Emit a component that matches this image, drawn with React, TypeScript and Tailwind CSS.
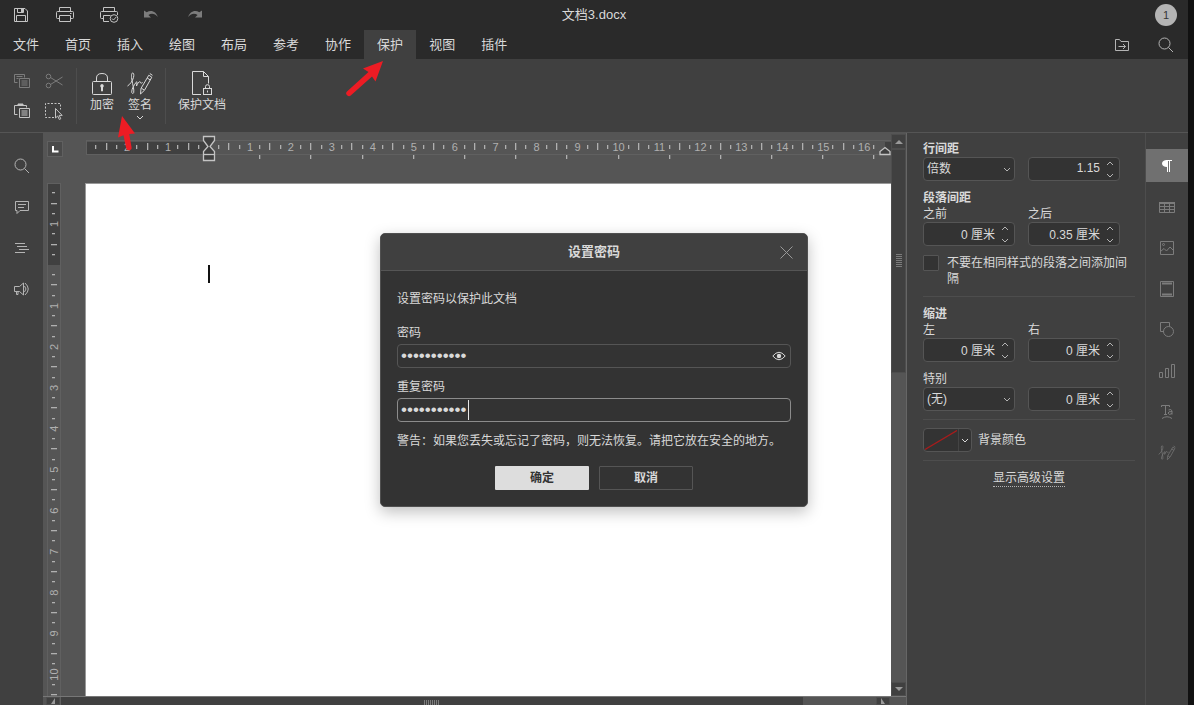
import React from "react";

type IconProps = { className?: string };

const stroke = { fill: "none", stroke: "currentColor", strokeWidth: 1 } as const;

/* ---------- title bar icons ---------- */

const SaveIcon = () => (
  <svg width="16" height="16" viewBox="0 0 16 16" aria-hidden="true" {...stroke}>
    <path d="M1.500 1.500h10.500l2.500 2.500v10.500h-13z" />
    <path d="M4.500 1.500v4h6v-4M3.500 14.500v-6h9v6" />
    <path d="M8 2h2v3h-2z" fill="currentColor" stroke="none" />
  </svg>
);

const PrintIcon = () => (
  <svg width="20" height="16" viewBox="0 0 20 16" aria-hidden="true" {...stroke}>
    <path d="M4.500 4.500v-4h11v4M4.500 11.500h-2q-1 0-1-1v-5q0-1 1-1h15q1 0 1 1v5q0 1-1 1h-2" />
    <path d="M4.500 8.500h11v6h-11z" />
    <path d="M15 6.500h1.500" />
  </svg>
);

const QuickPrintIcon = () => (
  <svg width="20" height="16" viewBox="0 0 20 16" aria-hidden="true" {...stroke}>
    <path d="M4.500 4.500v-4h11v4M4.500 11.500h-2q-1 0-1-1v-5q0-1 1-1h15q1 0 1 1v2.500" />
    <path d="M10 14.500h-5.500v-6h7" />
    <circle cx="15" cy="11.500" r="3.800" />
    <path d="M13 11.500l1.500 1.500 2.700-3" />
  </svg>
);

const UndoIcon = ({ className }: IconProps) => (
  <svg width="16" height="12" viewBox="0 0 16 12" aria-hidden="true" className={className} fill="currentColor">
    <path d="M1 1.500v7h7l-2.600-2.600c3.200-2 6.700-1.300 9.300 2-1.300-5-6.500-7.500-11-4.600z" />
  </svg>
);

/* ---------- tab row icons ---------- */

const OpenLocationIcon = () => (
  <svg width="16" height="14" viewBox="0 0 16 14" aria-hidden="true" {...stroke}>
    <path d="M1.500 12.500v-11h4l1.500 2h7.500v9z" />
    <path d="M4.500 8.500h7M9 6l2.500 2.500-2.500 2.500" />
  </svg>
);

const SearchIcon = () => (
  <svg width="16" height="16" viewBox="0 0 16 16" aria-hidden="true" {...stroke}>
    <circle cx="6.500" cy="6.500" r="5.500" />
    <path d="M10.500 10.500l4.500 4.500" />
  </svg>
);

/* ---------- ribbon icons ---------- */

const CopyIcon = () => (
  <svg width="16" height="16" viewBox="0 0 16 16" aria-hidden="true" {...stroke}>
    <path d="M3.500 9.500h-3v-8h10v3" />
    <path d="M2.500 3.500h6M2.500 5.500h2" />
    <path d="M5.500 5.500h10v9h-10zM7.500 8h6M7.500 10h6M7.500 12h6" />
  </svg>
);

const PasteIcon = () => (
  <svg width="16" height="16" viewBox="0 0 16 16" aria-hidden="true" {...stroke}>
    <path d="M3.500 11.500h-3v-9h12v2" />
    <path d="M4 1h5v1.500h-5z" fill="currentColor" />
    <path d="M5.500 5.500h10v9h-10zM7.500 8h6M7.500 10h6M7.500 12h6" />
  </svg>
);

const CutIcon = () => (
  <svg width="18" height="16" viewBox="0 0 18 16" aria-hidden="true" {...stroke}>
    <circle cx="3.500" cy="3.500" r="2.300" />
    <circle cx="3.500" cy="12.500" r="2.300" />
    <path d="M5.500 4.500l12 7.500M5.500 11.500l12-7.500" />
  </svg>
);

const SelectIcon = () => (
  <svg width="18" height="18" viewBox="0 0 18 18" aria-hidden="true" {...stroke}>
    <path d="M9 15.500h-8.500v-14h15v6" strokeDasharray="2 1.500" />
    <path d="M10.500 6.500v9.500l2.200-2 1.600 3.500 1.500-.7-1.600-3.400h3z" fill="#404040" />
  </svg>
);

const LockIcon = () => (
  <svg width="20" height="24" viewBox="0 0 20 24" aria-hidden="true" {...stroke}>
    <path d="M4.500 10v-4q0-4.500 5.500-4.500t5.500 4.500v4" />
    <rect x=".5" y="9.500" width="19" height="13" rx="1" />
    <path d="M10 12a1.900 1.900 0 0 1 1 3.400v3.800h-2v-3.800a1.900 1.900 0 0 1 1-3.400z" fill="currentColor" stroke="none" />
  </svg>
);

const SignatureIcon = ({ className }: IconProps) => (
  <svg viewBox="0 0 26 24" aria-hidden="true" className={className} {...stroke}>
    <path d="M.5 14c2.500-1.500 5-5 6-8.500.7-2.800.2-4.600-.9-4.500-1.400.2-1.300 3.500-.6 7.500.6 4 2.400 9.500 1.700 12-.4 1.500-2 1.200-2-.6 0-3.400 2.800-7.400 4.500-9.700.6-.8 1-.5.8.5l-.5 3.300c.8-2 2-4.200 3.300-4.300 1-.1.500 1.700 1.400 1.600.5 0 .8-.5 1.300-1" />
    <path d="M21.800 3.200l3 2-7.300 13-4 3.800.5-5.600zM20.200 6l3 1.900M14.300 16.200l3 1.900" />
    <path d="M22.800 1.500l2.700 1.800" />
  </svg>
);

const ProtectDocIcon = () => (
  <svg width="22" height="26" viewBox="0 0 22 26" aria-hidden="true" {...stroke}>
    <path d="M10 24.500h-8.500v-23h11l5 5v7" />
    <path d="M12.500 1.500v5h5" />
    <rect x="12.500" y="18.500" width="8" height="6" />
    <path d="M14.500 18.500v-2q0-1.800 2-1.800t2 1.800v2" />
    <path d="M16.500 20.500v2" />
  </svg>
);

const Chevron = ({ className }: IconProps) => (
  <svg width="8" height="5" viewBox="0 0 8 5" aria-hidden="true" className={className} {...stroke}>
    <path d="M1 1l3 3 3-3" />
  </svg>
);

/* ---------- side bar icons ---------- */

const CommentIcon = () => (
  <svg width="16" height="16" viewBox="0 0 16 16" aria-hidden="true" {...stroke}>
    <path d="M1.500 2.500h13v9h-8.500l-3 3v-3h-1.500z" />
    <path d="M4 5.500h8M4 8.500h6" />
  </svg>
);

const OutlineIcon = () => (
  <svg width="16" height="16" viewBox="0 0 16 16" aria-hidden="true" {...stroke}>
    <path d="M1 3.500h10M3 6.500h10M5 9.500h10M1 12.500h10" />
  </svg>
);

const FeedbackIcon = () => (
  <svg width="17" height="16" viewBox="0 0 17 16" aria-hidden="true" {...stroke}>
    <path d="M1.500 5.500h5l4-3.500v12l-4-3.500h-5zM3.500 10.500v3h1.500v-3" />
    <path d="M11.500 5q3 3 0 6M12 2q6.500 6 0 12" />
  </svg>
);

const TableIcon = () => (
  <svg width="16" height="13" viewBox="0 0 16 13" aria-hidden="true" {...stroke}>
    <path d="M.5 1.500h15v10h-15zM5.500 2v9.500M10.500 2v9.500M.5 5.500h15M.5 8.500h15" />
    <path d="M0 1h16v2h-16z" fill="currentColor" stroke="none" />
  </svg>
);

const ImageIcon = () => (
  <svg width="16" height="16" viewBox="0 0 16 16" aria-hidden="true" {...stroke}>
    <path d="M1.500 1.500h13v13h-13zM1.500 11.500l3.500-3 2.500 2.500 3.500-4 3.500 3.500" />
    <circle cx="4.500" cy="4.500" r="1" />
  </svg>
);

const HeaderFooterIcon = () => (
  <svg width="16" height="16" viewBox="0 0 16 16" aria-hidden="true" {...stroke}>
    <path d="M1.500.5h13v15h-13z" />
    <path d="M3 2.500h10M3 13.500h10" strokeWidth="2" />
  </svg>
);

const ShapeIcon = () => (
  <svg width="16" height="16" viewBox="0 0 16 16" aria-hidden="true" {...stroke}>
    <path d="M5 9.500h-3.500v-9h9v4" />
    <circle cx="9.500" cy="9.500" r="5" />
  </svg>
);

const ChartIcon = () => (
  <svg width="16" height="16" viewBox="0 0 16 16" aria-hidden="true" {...stroke}>
    <path d="M.5 9.500h3v5h-3zM6.500 5.500h3v9h-3zM12.500 1.500h3v13h-3z" />
  </svg>
);

const TextArtIcon = () => (
  <svg width="16" height="16" viewBox="0 0 16 16" aria-hidden="true" {...stroke}>
    <path d="M2.500 3v-1.500h8v1.500M6.500 1.500v9M5 10.500h3M9.500 6q3-1.500 3.500 1v3.500M13 7.500q-4-.2-4 1.700 1 2.300 4 .3" />
    <path d="M3 14.500q5-3.500 10 0" />
  </svg>
);

const ParagraphIcon = () => (
  <svg width="12" height="14" viewBox="0 0 12 14" aria-hidden="true">
    <path d="M6 1v7c-3 0-5-1.200-5-3.500s2-3.500 5-3.500z" fill="currentColor" />
    <path d="M5 1.500h6M6.500 1v12M8.500 1v12" {...stroke} />
  </svg>
);

const EyeIcon = () => (
  <svg width="14" height="10" viewBox="0 0 14 10" aria-hidden="true" {...stroke}>
    <path d="M.8 5q6.200-7.500 12.400 0-6.200 7.500-12.400 0z" />
    <circle cx="7" cy="5" r="2.200" fill="currentColor" stroke="none" />
  </svg>
);

/* ---------- rulers ---------- */

const CM = 40.95;

function HorizontalRuler() {
  const zero = 123;
  const quarters = Array.from({ length: 77 }, (_, i) => i - 11);
  const stops = Array.from({ length: 13 }, (_, i) => i + 1);
  return (
    <svg width="806" height="50" aria-hidden="true" className="block">
      <rect x="0.500" y="7.500" width="806" height="14" fill="#555" stroke="#606060" />
      <rect x="1" y="9" width="122" height="12" fill="#404040" />
      <rect x="799" y="9" width="7" height="12" fill="#404040" />
      {quarters.map((q) => {
        const x = zero + (q * CM) / 4;
        if (q === 0) return null;
        if (q % 4 === 0)
          return (
            <text key={q} x={x} y="18" textAnchor="middle" fontSize="11" fill="#b0b0b0">
              {Math.abs(q / 4)}
            </text>
          );
        const tall = q % 2 === 0;
        return <rect key={q} x={Math.round(x) - 1} y={tall ? 10 : 12} width="1.300" height={tall ? 7 : 4} fill="#b0b0b0" />;
      })}
      {stops.map((s) => (
        <rect key={s} x={Math.round(zero + s * 1.25 * CM) - 1} y="22" width="1.300" height="4" fill="#b0b0b0" />
      ))}
      <g fill="#404040" stroke="#c4c4c4" strokeWidth="1.300">
        <path d="M117.500 3.500h11v4l-4.500 6 4.500 5v9h-11v-9l4.500-5-4.500-6z" />
        <path d="M117.500 21.500h11" />
        <path d="M794 21.500v-3l5-4 5 4v3z" />
      </g>
    </svg>
  );
}

function VerticalRuler() {
  const zero = 82;
  const quarters = Array.from({ length: 50 }, (_, i) => i - 7);
  return (
    <svg width="15" height="1200" aria-hidden="true" className="block">
      <rect x="0.500" y="0.500" width="13" height="1200" fill="#555" stroke="#606060" />
      <rect x="1" y="1" width="12" height="81" fill="#404040" />
      {quarters.map((q) => {
        const y = zero + (q * CM) / 4;
        if (q === 0) return null;
        if (q % 4 === 0)
          return (
            <text key={q} transform={`translate(11 ${y}) rotate(-90)`} textAnchor="middle" fontSize="11" fill="#b0b0b0">
              {Math.abs(q / 4)}
            </text>
          );
        const wide = q % 2 === 0;
        return <rect key={q} x={wide ? 4 : 5} y={Math.round(y) - 1} width={wide ? 6 : 3} height="1.300" fill="#b0b0b0" />;
      })}
    </svg>
  );
}

/* ---------- form controls ---------- */

function Spinner({ id, label, value }: { id: string; label: string; value: string }) {
  return (
    <div className="flex h-6 items-center rounded-sm border border-[#555] bg-[#333] pr-[3px]">
      <input id={id} aria-label={label} defaultValue={value} className="h-full w-full min-w-0 bg-transparent pr-1 pb-[2px] text-right outline-none" />
      <div className="flex flex-col gap-1">
        <button type="button" aria-label={`${label} +`} className="flex h-2 w-3 items-center justify-center text-[#b4b4b4]">
          <Chevron className="rotate-180" />
        </button>
        <button type="button" aria-label={`${label} −`} className="flex h-2 w-3 items-center justify-center text-[#b4b4b4]">
          <Chevron />
        </button>
      </div>
    </div>
  );
}

function Dropdown({ label, options }: { label: string; options: string[] }) {
  return (
    <div className="relative">
      <select aria-label={label} className="block h-6 w-full appearance-none rounded-sm border border-[#555] bg-[#333] px-[3px] outline-none">
        {options.map((o) => (
          <option key={o}>{o}</option>
        ))}
      </select>
      <Chevron className="pointer-events-none absolute top-[10px] right-1 text-[#b4b4b4]" />
    </div>
  );
}

const Divider = () => <hr className="mr-[10px] border-[#4d4d4d]" />;

/* ---------- page sections ---------- */

const tabs = ["文件", "首页", "插入", "绘图", "布局", "参考", "协作", "保护", "视图", "插件"];

function Header() {
  const tool = "flex h-[29px] w-11 items-center justify-center";
  return (
    <header className="bg-[#2a2a2a]">
      <div className="grid h-[30px] grid-cols-[1fr_auto_1fr] items-center">
        <div className="-ml-px flex text-[#c4c4c4]">
          <button type="button" aria-label="保存" className={tool}><SaveIcon /></button>
          <button type="button" aria-label="打印" className={tool}><PrintIcon /></button>
          <button type="button" aria-label="快速打印" className={tool}><QuickPrintIcon /></button>
          <button type="button" aria-label="撤消" className="flex h-[29px] w-10 items-center justify-center text-[#7c7c7c]"><UndoIcon /></button>
          <button type="button" aria-label="重做" className="flex h-[29px] w-12 items-center justify-center text-[#7c7c7c]"><UndoIcon className="-scale-x-100" /></button>
        </div>
        <h1 className="text-[13px]">文档3.docx</h1>
        <div className="flex justify-end pr-[11px]">
          <button type="button" aria-label="用户" className="size-[22px] rounded-full bg-[#b4b4b4] text-[11px] text-[#333]">1</button>
        </div>
      </div>
      <div className="flex items-center justify-between">
        <nav className="flex" role="tablist">
          {tabs.map((t) => (
            <button
              key={t}
              type="button"
              role="tab"
              aria-selected={t === "保护"}
              className={`h-[29px] px-[13px] text-[13px] whitespace-nowrap ${t === "保护" ? "bg-[#404040]" : ""}`}
            >
              {t}
            </button>
          ))}
        </nav>
        <div className="flex text-[#b4b4b4]">
          <button type="button" aria-label="打开文件所在位置" className={tool}><OpenLocationIcon /></button>
          <button type="button" aria-label="查找" className={tool}><SearchIcon /></button>
        </div>
      </div>
    </header>
  );
}

function Ribbon() {
  const small = "flex h-[30px] w-8 items-center justify-center";
  return (
    <div className="flex h-[74px] items-center border-b border-[#555] bg-[#404040]">
      <div className="grid grid-cols-2 pr-[6px] pl-[6px] text-[#c4c4c4]">
        <button type="button" aria-label="复制" className="flex h-[30px] w-8 items-center justify-center text-[#7c7c7c]"><CopyIcon /></button>
        <button type="button" aria-label="剪切" className="flex h-[30px] w-8 items-center justify-center text-[#7c7c7c]"><CutIcon /></button>
        <button type="button" aria-label="粘贴" className={small}><PasteIcon /></button>
        <button type="button" aria-label="选择" className={small}><SelectIcon /></button>
      </div>
      <div className="flex h-14 items-start gap-1 border-x border-[#4d4d4d] px-2 text-xs">
        <button type="button" className="flex w-[34px] flex-col items-center pt-1">
          <LockIcon />
          <span className="mt-px leading-4 whitespace-nowrap">加密</span>
        </button>
        <button type="button" className="flex w-[34px] flex-col items-center pt-1">
          <SignatureIcon className="h-6 w-[26px]" />
          <span className="mt-px leading-4 whitespace-nowrap">签名</span>
          <Chevron className="mt-[2px]" />
        </button>
      </div>
      <div className="flex h-14 items-start px-3 text-xs">
        <button type="button" className="flex flex-col items-center pt-[2px]">
          <ProtectDocIcon />
          <span className="mt-px leading-4 whitespace-nowrap">保护文档</span>
        </button>
      </div>
    </div>
  );
}

function LeftBar() {
  const items: [string, React.ReactNode][] = [
    ["查找", <SearchIcon />],
    ["评论", <CommentIcon />],
    ["标题", <OutlineIcon />],
    ["反馈和支持", <FeedbackIcon />],
  ];
  return (
    <aside className="flex w-[43px] shrink-0 flex-col gap-[9px] bg-[#404040] pt-[17px] text-[#b4b4b4]">
      {items.map(([label, icon]) => (
        <button key={label} type="button" aria-label={label} className="flex h-8 items-center justify-center">
          {icon}
        </button>
      ))}
    </aside>
  );
}

function Editor() {
  const arrow = "flex items-center justify-center border border-[#4d4d4d] bg-[#404040] text-[#999]";
  return (
    <main className="grid min-w-0 flex-1 grid-cols-[43px_minmax(0,1fr)_15px] grid-rows-[50px_minmax(0,1fr)_9px] border-r border-[#666] bg-[#555]">
      <div className="pt-2 pl-1">
        <button type="button" aria-label="制表符" className="flex size-4 items-center justify-center border border-[#606060] bg-[#4a4a4a]">
          <svg width="8" height="8" aria-hidden="true"><path d="M2 1v5.500h5.500" fill="none" stroke="#fff" strokeWidth="2" /></svg>
        </button>
      </div>
      <div className="overflow-hidden"><HorizontalRuler /></div>
      <div className="row-span-2 flex flex-col pt-px">
        <button type="button" aria-label="向上滚动" className={`${arrow} h-[15px]`}>
          <svg width="8" height="5" aria-hidden="true"><path d="M0 5l4-4 4 4z" fill="currentColor" /></svg>
        </button>
        <div className="min-h-0 flex-1">
          <div className="flex h-[42%] flex-col items-center justify-center gap-px border border-[#4d4d4d] bg-[#404040]">
            {Array.from({ length: 7 }, (_, i) => (
              <span key={i} className="h-px w-[6px] bg-[#7c7c7c]" />
            ))}
          </div>
        </div>
        <button type="button" aria-label="向下滚动" className={`${arrow} h-[14px]`}>
          <svg width="8" height="5" aria-hidden="true"><path d="M0 0l4 4 4-4z" fill="currentColor" /></svg>
        </button>
      </div>
      <div className="row-span-2 overflow-hidden pl-1"><VerticalRuler /></div>
      <div className="-ml-px border-t border-l border-[#999] bg-white pt-[81px] pl-[122px]" role="textbox" aria-label="文档正文" tabIndex={0}>
        <div className="h-[18px] w-[2px] bg-[#111]" />
      </div>
      <div className="col-span-2 -ml-[43px] flex border-t border-[#777] pl-[3px]">
        <button type="button" aria-label="向左滚动" className={`${arrow} w-[14px]`}>
          <svg width="4" height="6" aria-hidden="true"><path d="M4 0v6L0 6z" fill="currentColor" /></svg>
        </button>
        <div className="min-w-0 flex-1 pl-px">
          <div className="flex h-full w-[91%] items-end justify-center gap-px bg-[#404040]">
            {Array.from({ length: 8 }, (_, i) => (
              <span key={i} className="h-[5px] w-px bg-[#7c7c7c]" />
            ))}
          </div>
        </div>
        <button type="button" aria-label="向右滚动" className={`${arrow} mr-4 w-[14px]`}>
          <svg width="4" height="6" aria-hidden="true"><path d="M0 0v6h4z" fill="currentColor" /></svg>
        </button>
      </div>
    </main>
  );
}

function ParagraphPanel() {
  const pair = "grid grid-cols-[92px_92px] gap-x-[13px]";
  return (
    <section aria-label="段落设置" className="w-[238px] shrink-0 bg-[#404040] pt-2 pl-4 text-xs leading-4">
      <h2 className="font-bold">行间距</h2>
      <div className={pair}>
        <Dropdown label="行间距" options={["倍数", "至少", "精确"]} />
        <Spinner id="line" label="行间距数值" value="1.15" />
      </div>
      <h2 className="mt-[9px] font-bold">段落间距</h2>
      <div className={pair}>
        <label htmlFor="before">之前</label>
        <label htmlFor="after">之后</label>
        <Spinner id="before" label="之前" value="0 厘米" />
        <Spinner id="after" label="之后" value="0.35 厘米" />
      </div>
      <label className="my-[9px] flex gap-2 pr-3">
        <input type="checkbox" className="size-4 shrink-0 appearance-none rounded-[1px] border border-[#555] bg-[#333]" />
        <span>不要在相同样式的段落之间添加间隔</span>
      </label>
      <Divider />
      <h2 className="mt-[9px] font-bold">缩进</h2>
      <div className={pair}>
        <label htmlFor="left">左</label>
        <label htmlFor="right">右</label>
        <Spinner id="left" label="左" value="0 厘米" />
        <Spinner id="right" label="右" value="0 厘米" />
      </div>
      <h3 className="mt-[9px]">特别</h3>
      <div className="mb-2 grid grid-cols-[92px_92px] gap-x-[13px]">
        <Dropdown label="特别" options={["(无)", "首行", "悬挂"]} />
        <Spinner id="special" label="特别数值" value="0 厘米" />
      </div>
      <Divider />
      <div className="my-2 flex items-center gap-[6px]">
        <button type="button" id="bg" aria-labelledby="bg-label" className="flex h-6 w-[49px] items-stretch rounded-sm border border-[#555] bg-[#333]">
          <span className="flex flex-1 border-r border-[#444] p-px">
            <svg viewBox="0 0 34 20" preserveAspectRatio="none" className="size-full" aria-hidden="true">
              <path d="M0 19.500L34 .5" fill="none" stroke="#a81c1c" strokeWidth="1.300" />
            </svg>
          </span>
          <span className="flex w-3 items-center justify-center"><Chevron /></span>
        </button>
        <span id="bg-label">背景颜色</span>
      </div>
      <Divider />
      <div className="mt-[9px] pr-[10px] text-center">
        <a href="#advanced" className="inline-block border-b border-dotted border-[#b4b4b4]">显示高级设置</a>
      </div>
    </section>
  );
}

function RightBar() {
  const items: [string, React.ReactNode][] = [
    ["段落设置", <ParagraphIcon />],
    ["表格设置", <TableIcon />],
    ["图片设置", <ImageIcon />],
    ["页眉和页脚设置", <HeaderFooterIcon />],
    ["形状设置", <ShapeIcon />],
    ["图表设置", <ChartIcon />],
    ["艺术字设置", <TextArtIcon />],
    ["签名设置", <SignatureIcon className="h-4 w-[18px]" />],
  ];
  return (
    <aside className="flex w-[43px] shrink-0 flex-col gap-[9px] border-l border-[#4d4d4d] bg-[#404040] pt-4">
      {items.map(([label, icon], i) => (
        <button
          key={label}
          type="button"
          aria-label={label}
          className={`flex shrink-0 items-center justify-center ${i === 0 ? "h-[33px] bg-[#707070] text-white" : "h-8 text-[#7c7c7c]"}`}
        >
          {icon}
        </button>
      ))}
    </aside>
  );
}

function PasswordDialog() {
  return (
    <div className="absolute inset-x-0 top-[233px] flex justify-center">
      <form
        role="dialog"
        aria-labelledby="dialog-title"
        onSubmit={(e) => e.preventDefault()}
        className="w-[428px] overflow-hidden rounded-[5px] border border-[#505050] bg-[#333] text-xs leading-[18px] shadow-[0_5px_15px_rgba(0,0,0,0.25)]"
      >
        <div className="grid h-[37px] grid-cols-[1fr_auto_1fr] items-center border-b border-[#555] bg-[#404040]">
          <h2 id="dialog-title" className="col-start-2 text-[13px] font-bold">设置密码</h2>
          <button type="button" aria-label="关闭" className="mr-[14px] justify-self-end text-[#999]">
            <svg width="13" height="13" aria-hidden="true" {...stroke}><path d="M.5.5l12 12M12.500.5l-12 12" /></svg>
          </button>
        </div>
        <div className="px-4 pt-[19px] pb-4">
          <p>设置密码以保护此文档</p>
          <label htmlFor="pwd" className="mt-4 block">密码</label>
          <div className="mt-[2px] flex h-6 items-center rounded-sm border border-[#555] pr-1">
            <input id="pwd" type="password" defaultValue="password123" className="h-full min-w-0 flex-1 bg-transparent px-[3px] text-[17px] outline-none" />
            <button type="button" aria-label="显示密码"><EyeIcon /></button>
          </div>
          <label htmlFor="pwd2" className="mt-[10px] block">重复密码</label>
          <div className="relative mt-[2px] flex h-6 items-center rounded-sm border border-[#8c8c8c]">
            <input id="pwd2" type="password" defaultValue="password123" className="h-full min-w-0 flex-1 bg-transparent px-[3px] text-[17px] outline-none" />
            <span className="absolute top-px left-[70px] h-5 w-px bg-[#e6e6e6]" />
          </div>
          <p className="mt-[10px] whitespace-nowrap">警告：如果您丢失或忘记了密码，则无法恢复。请把它放在安全的地方。</p>
          <div className="mt-4 flex justify-center gap-[10px] font-bold">
            <button type="submit" className="h-6 w-[94px] rounded-[1px] bg-[#ddd] text-[#333]">确定</button>
            <button type="button" className="h-6 w-[94px] rounded-[1px] border border-[#555]">取消</button>
          </div>
        </div>
      </form>
    </div>
  );
}

function Pointers() {
  return (
    <>
      <svg width="40" height="36" aria-hidden="true" className="pointer-events-none absolute top-[61px] left-[345px]">
        <path d="M38 0L30.500 20.500 27 15.500 6 34.200a2.600 2.600 0 0 1-4-3.800L23.500 11 18 7.500z" fill="#ed1c24" />
      </svg>
      <svg width="24" height="36" aria-hidden="true" className="pointer-events-none absolute top-[116px] left-[113px]">
        <path d="M9 0L22 17.500 16.200 18 18.500 31a2.700 2.700 0 0 1-5.300 1.200L10.500 19.200 5 21.500z" fill="#ed1c24" />
      </svg>
    </>
  );
}

export default function App() {
  return (
    <div className="flex h-screen overflow-hidden bg-[#111] font-['Liberation_Sans','Noto_Sans_CJK_SC',sans-serif] text-[#d9d9d9]">
      <div className="relative flex min-w-0 flex-1 flex-col">
        <Header />
        <Ribbon />
        <div className="flex min-h-0 flex-1">
          <LeftBar />
          <Editor />
          <ParagraphPanel />
          <RightBar />
        </div>
        <PasswordDialog />
        <Pointers />
      </div>
      <div className="w-[6px] shrink-0" />
    </div>
  );
}
